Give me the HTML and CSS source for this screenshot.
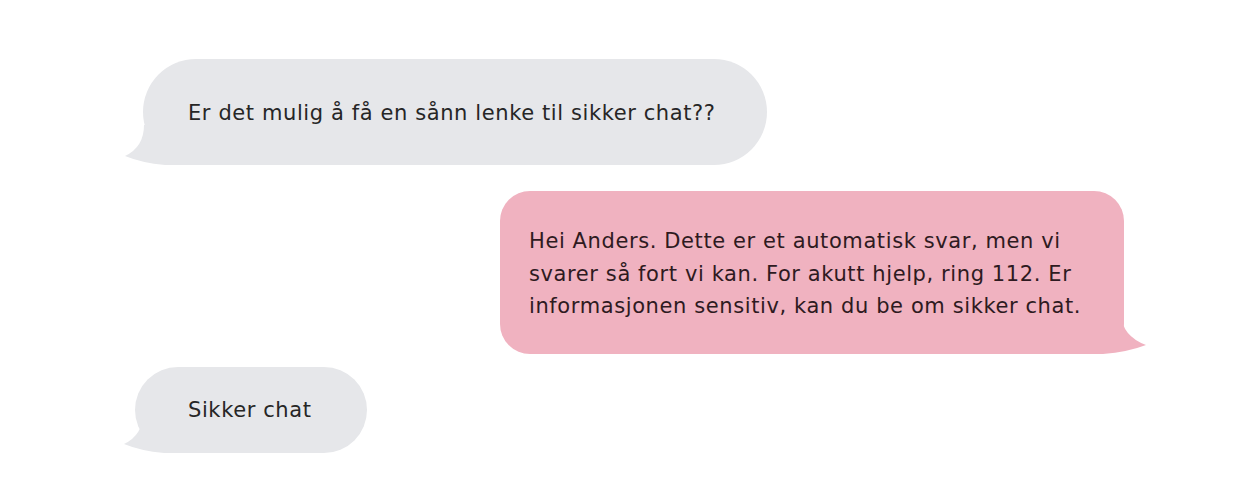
FILE: index.html
```html
<!DOCTYPE html>
<html lang="no">
<head>
    <meta charset="UTF-8">
    <meta name="viewport" content="width=device-width, initial-scale=1.0">
    <title>Chat</title>
    <link rel="stylesheet" href="styles.css">
</head>
<body>

    <div class="chat">
        <!-- Melding fra bruker -->
        <div class="bubble incoming first">
            <svg class="tail" viewBox="0 0 76 40" width="76" height="40"><path d="M24 0 Q24 22 5 31 Q22 38 45 40 L76 40 L76 0 Z"/></svg>
            <p>Er det mulig å få en sånn lenke til sikker chat??</p>
        </div>

        <!-- Automatisk svar -->
        <div class="bubble outgoing">
            <svg class="tail" viewBox="0 0 76 40" width="76" height="40"><path d="M27 0 Q26 22 2 31 Q20 38 45 40 L76 40 L76 0 Z"/></svg>
            <p>Hei Anders. Dette er et automatisk svar, men vi<br>svarer så fort vi kan. For akutt hjelp, ring 112. Er<br>informasjonen sensitiv, kan du be om sikker chat.</p>
        </div>

        <div class="bubble incoming short">
            <svg class="tail" viewBox="0 0 76 40" width="76" height="40"><path d="M24 0 Q24 22 5 31 Q22 38 45 40 L76 40 L76 0 Z"/></svg>
            <p>Sikker chat</p>
        </div>
    </div>

</body>
</html>
```

FILE: styles.css
```css
/* Globalt */
body {
    margin: 0;
    background-color: #ffffff;
    font-family: 'DejaVu Sans', sans-serif;
    color: #262626;
}

.chat {
    display: flex;
    flex-direction: column;
    padding-top: 59px;
}

.bubble {
    position: relative;
    box-sizing: border-box;
}

.bubble p {
    position: relative;
    margin: 0;
    font-size: 21px;
    line-height: 32.5px;
    letter-spacing: 0.6px;
    white-space: nowrap;
}

.tail {
    position: absolute;
    bottom: 0;
    display: block;
}

/* Innkommende (grå) */
.incoming {
    align-self: flex-start;
    background-color: #e6e7ea;
}

.incoming .tail {
    left: -23px;
    fill: #e6e7ea;
}

.first {
    margin-left: 143px;
    width: 624px;
    height: 106px;
    padding: 38px 20px 0 45px;
    border-radius: 53px;
}

.short {
    margin-left: 135px;
    margin-top: 13px;
    width: 232px;
    height: 86px;
    padding: 27px 20px 0 53px;
    border-radius: 43px;
}

.short .tail {
    left: -16px;
}

/* Utgående (rosa) */
.outgoing {
    align-self: flex-end;
    margin-top: 26px;
    margin-right: 116px;
    width: 624px;
    height: 163px;
    padding: 34px 20px 0 29px;
    background-color: #f0b2c0;
    border-radius: 30px;
    color: #2e1a21;
}

.outgoing .tail {
    right: -24px;
    fill: #f0b2c0;
    transform: scaleX(-1);
}
```
